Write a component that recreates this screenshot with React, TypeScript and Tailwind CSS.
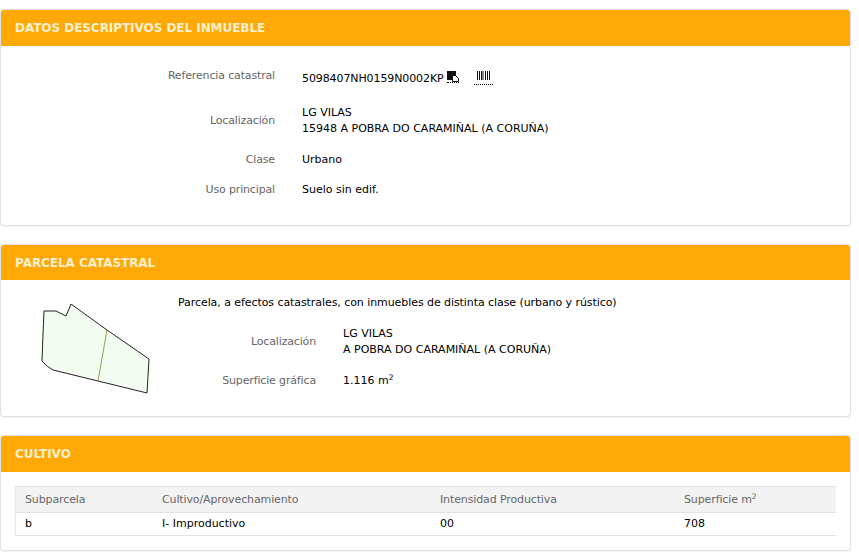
const font = "[font-family:'DejaVu_Sans',Verdana,sans-serif]";

function Panel({ title, headerClass, bodyClass, children }: { title: string; headerClass: string; bodyClass: string; children: React.ReactNode }) {
    return (
        <section className="w-[851px] rounded-[4px] border border-[#e0e0e0] bg-white shadow-[0_1px_1px_rgba(0,0,0,0.05)] overflow-hidden">
            <h2 className={`${headerClass} flex items-center bg-[#ffa908] pl-[14px] text-[12px] font-bold tracking-[-0.05px] text-[#fdf0cc]`}>
                {title}
            </h2>
            <div className={bodyClass}>{children}</div>
        </section>
    );
}

function Row({ label, rowClass, labelWidth, children }: { label: string; rowClass: string; labelWidth: string; children: React.ReactNode }) {
    return (
        <div className={`flex items-center gap-[27px] ${rowClass}`}>
            <div className={`${labelWidth} shrink-0 text-right tracking-[-0.15px] text-[#666]`}>{label}</div>
            <div className="text-black">{children}</div>
        </div>
    );
}

function ParcelMap() {
    return (
        <svg width="112" height="92" viewBox="0 0 112 92" className="shrink-0">
            <path d="M3 7 L15 7 L25 12 L30 0 L66 26 L108 55 L106 89 L57 77 L12 66 Q6 63 1 57 L2 30 Z" fill="#f2fcf1" stroke="#222" strokeWidth="1" />
            <path d="M66 26 L57 77" fill="none" stroke="#9a9a55" strokeWidth="1" />
        </svg>
    );
}

function BarcodeIcon() {
    return (
        <span className="inline-flex w-[19px] flex-col items-center border-b border-dotted border-black pb-[4px]">
            <svg width="13" height="9" viewBox="0 0 13 9">
                <path d="M0.5 0V9M2.5 0V9M4.5 0V9M6 0V9M8.5 0V9M10.5 0V9M12.5 0V9" stroke="#111" strokeWidth="1" />
            </svg>
        </span>
    );
}

function CopyIcon() {
    return (
        <span className="relative top-[3px] inline-flex border-b border-dotted border-black">
            <svg width="12" height="11" viewBox="0 0 12 11">
                <rect x="0" y="0" width="9" height="9" fill="#111" />
                <path d="M5.5 4.5H8.5L11.5 7.5V10.5H5.5Z" fill="#fff" stroke="#111" strokeWidth="1" />
            </svg>
        </span>
    );
}

export default function App() {
    return (
        <div className={`${font} flex h-[559px] w-[859px] flex-col gap-[18px] overflow-hidden bg-white pt-[9px] text-[11px] leading-[16px]`}>
            <Panel title="DATOS DESCRIPTIVOS DEL INMUEBLE" headerClass="h-[36px]" bodyClass="h-[179px] pt-[20px]">
                <Row label="Referencia catastral" rowClass="h-[20px]" labelWidth="w-[274px]">
                    <span className="flex items-center">
                        <span className="relative top-[3px] tracking-[-0.1px]">5098407NH0159N0002KP</span>
                        <span className="ml-[3px]"><CopyIcon /></span>
                        <span className="ml-[15px] relative top-[1px]"><BarcodeIcon /></span>
                    </span>
                </Row>
                <Row label="Localización" rowClass="mt-[19px] h-[32px]" labelWidth="w-[274px]">
                    <div>LG VILAS</div>
                    <div>15948 A POBRA DO CARAMIÑAL (A CORUÑA)</div>
                </Row>
                <Row label="Clase" rowClass="mt-[15px] h-[16px]" labelWidth="w-[274px]">Urbano</Row>
                <Row label="Uso principal" rowClass="mt-[14px] h-[16px]" labelWidth="w-[274px]">Suelo sin edif.</Row>
            </Panel>

            <Panel title="PARCELA CATASTRAL" headerClass="h-[35px]" bodyClass="flex h-[136px]">
                <div className="ml-[40px] mt-[24px]"><ParcelMap /></div>
                <div className="ml-[25px] pt-[15px]">
                    <p className="tracking-[-0.07px] text-black">Parcela, a efectos catastrales, con inmuebles de distinta clase (urbano y rústico)</p>
                    <Row label="Localización" rowClass="mt-[15px] h-[32px]" labelWidth="w-[138px]">
                        <div>LG VILAS</div>
                        <div>A POBRA DO CARAMIÑAL (A CORUÑA)</div>
                    </Row>
                    <Row label="Superficie gráfica" rowClass="mt-[15px] h-[16px]" labelWidth="w-[138px]">
                        1.116 m<sup className="text-[7.5px]">2</sup>
                    </Row>
                </div>
            </Panel>

            <Panel title="CULTIVO" headerClass="h-[36px]" bodyClass="h-[78px] pl-[14px] pt-[14px]">
                <div className="w-[821px] border-y border-[#e3e3e3] border-l border-l-[#e8e8e8]">
                    <div className="grid h-[25px] grid-cols-[137px_278px_244px_1fr] items-center bg-[#f3f3f3] pl-[9px] tracking-[-0.12px] text-[#666]">
                        <div>Subparcela</div>
                        <div>Cultivo/Aprovechamiento</div>
                        <div>Intensidad Productiva</div>
                        <div>Superficie m<sup className="text-[7.5px]">2</sup></div>
                    </div>
                    <div className="grid h-[23px] grid-cols-[137px_278px_244px_1fr] items-center border-t border-[#e3e3e3] pl-[9px] text-black">
                        <div>b</div>
                        <div>I- Improductivo</div>
                        <div>00</div>
                        <div>708</div>
                    </div>
                </div>
            </Panel>
        </div>
    );
}
